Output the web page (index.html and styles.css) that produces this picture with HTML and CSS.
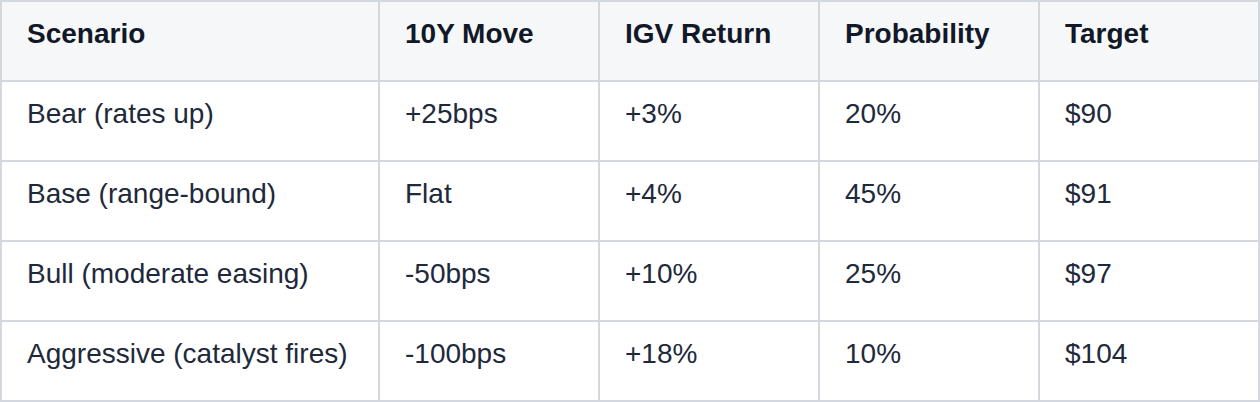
FILE: index.html
```html
<!DOCTYPE html>
<html lang="en">
<head>
<meta charset="utf-8">
<title>Scenarios</title>
<link rel="stylesheet" href="styles.css">
</head>
<body>
<table class="scenarios">
  <colgroup>
    <col class="col-wide">
    <col class="col-narrow">
    <col class="col-narrow">
    <col class="col-narrow">
    <col class="col-narrow">
  </colgroup>
  <thead>
    <tr>
      <th>Scenario</th>
      <th>10Y Move</th>
      <th>IGV Return</th>
      <th>Probability</th>
      <th>Target</th>
    </tr>
  </thead>
  <tbody>
    <tr>
      <td>Bear (rates up)</td>
      <td>+25bps</td>
      <td>+3%</td>
      <td>20%</td>
      <td>$90</td>
    </tr>
    <tr>
      <td>Base (range-bound)</td>
      <td>Flat</td>
      <td>+4%</td>
      <td>45%</td>
      <td>$91</td>
    </tr>
    <tr>
      <td>Bull (moderate easing)</td>
      <td>-50bps</td>
      <td>+10%</td>
      <td>25%</td>
      <td>$97</td>
    </tr>
    <tr>
      <td>Aggressive (catalyst fires)</td>
      <td>-100bps</td>
      <td>+18%</td>
      <td>10%</td>
      <td>$104</td>
    </tr>
  </tbody>
</table>
</body>
</html>
```

FILE: styles.css
```css
html, body {
  margin: 0;
  padding: 0;
  background: #ffffff;
}

.scenarios {
  border-collapse: collapse;
  table-layout: fixed;
  width: 1260px;
  font-family: "Liberation Sans", Arial, Helvetica, sans-serif;
  font-size: 28px;
  line-height: 32px;
  color: #1e293b;
}

.col-wide { width: 378px; }
.col-narrow { width: 220px; }

.scenarios th,
.scenarios td {
  border: 2px solid #d3d8df;
  height: 80px;
  box-sizing: border-box;
  padding: 16px 24px 0 25px;
  text-align: left;
  vertical-align: top;
  white-space: nowrap;
}

.scenarios th {
  background: #f6f7f9;
  font-weight: 700;
  color: #111827;
}
```
